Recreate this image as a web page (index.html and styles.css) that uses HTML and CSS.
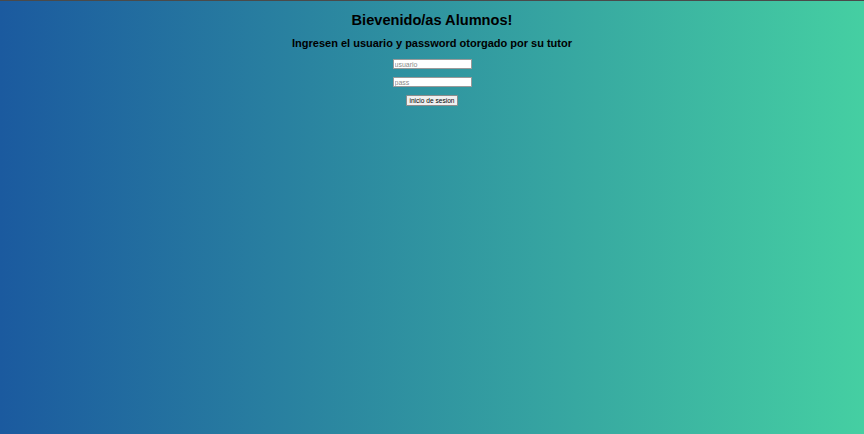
FILE: index.html
```html
<!DOCTYPE html>
<html lang="es">
<head>
<meta charset="utf-8">
<title>Alumnos</title>
<link rel="stylesheet" href="styles.css">
</head>
<body>
<main class="login">
  <h1 class="title">Bievenido/as Alumnos!</h1>
  <h2 class="subtitle">Ingresen el usuario y password otorgado por su tutor</h2>
  <form class="form">
    <input class="field" type="text" placeholder="usuario">
    <input class="field" type="password" placeholder="pass">
    <button class="btn" type="button">inicio de sesion</button>
  </form>
</main>
</body>
</html>
```
FILE: styles.css
```css
html, body {
  margin: 0;
  height: 100%;
}
body {
  border-top: 1px solid #4a4a4a;
  box-sizing: border-box;
  background: linear-gradient(to right, #1b5a9f, #45cfa2);
  font-family: "Liberation Sans", Arial, sans-serif;
  color: #000;
}
.login {
  display: flex;
  flex-direction: column;
  align-items: center;
  padding-top: 10px;
}
.title {
  margin: 0;
  font-size: 14.6px;
  line-height: 18px;
  font-weight: bold;
}
.subtitle {
  margin: 7px 0 0;
  font-size: 11px;
  line-height: 14px;
  font-weight: bold;
}
.form {
  display: flex;
  flex-direction: column;
  align-items: center;
  gap: 8px;
  margin-top: 9px;
}
.field {
  box-sizing: border-box;
  width: 79px;
  height: 10px;
  margin: 0;
  padding: 0 1px;
  border: 1px solid #9a9a9a;
  background: #fff;
  font-family: "Liberation Sans", Arial, sans-serif;
  font-size: 7px;
  line-height: 8px;
}
.field::placeholder {
  color: #8a8a8a;
}
.btn {
  box-sizing: border-box;
  height: 11px;
  margin: 0;
  padding: 0 2px;
  border: 1px solid #8c8c8c;
  border-radius: 1px;
  background: #efefef;
  font-family: "Liberation Sans", Arial, sans-serif;
  font-size: 6.6px;
  line-height: 9px;
  color: #000;
}
```
